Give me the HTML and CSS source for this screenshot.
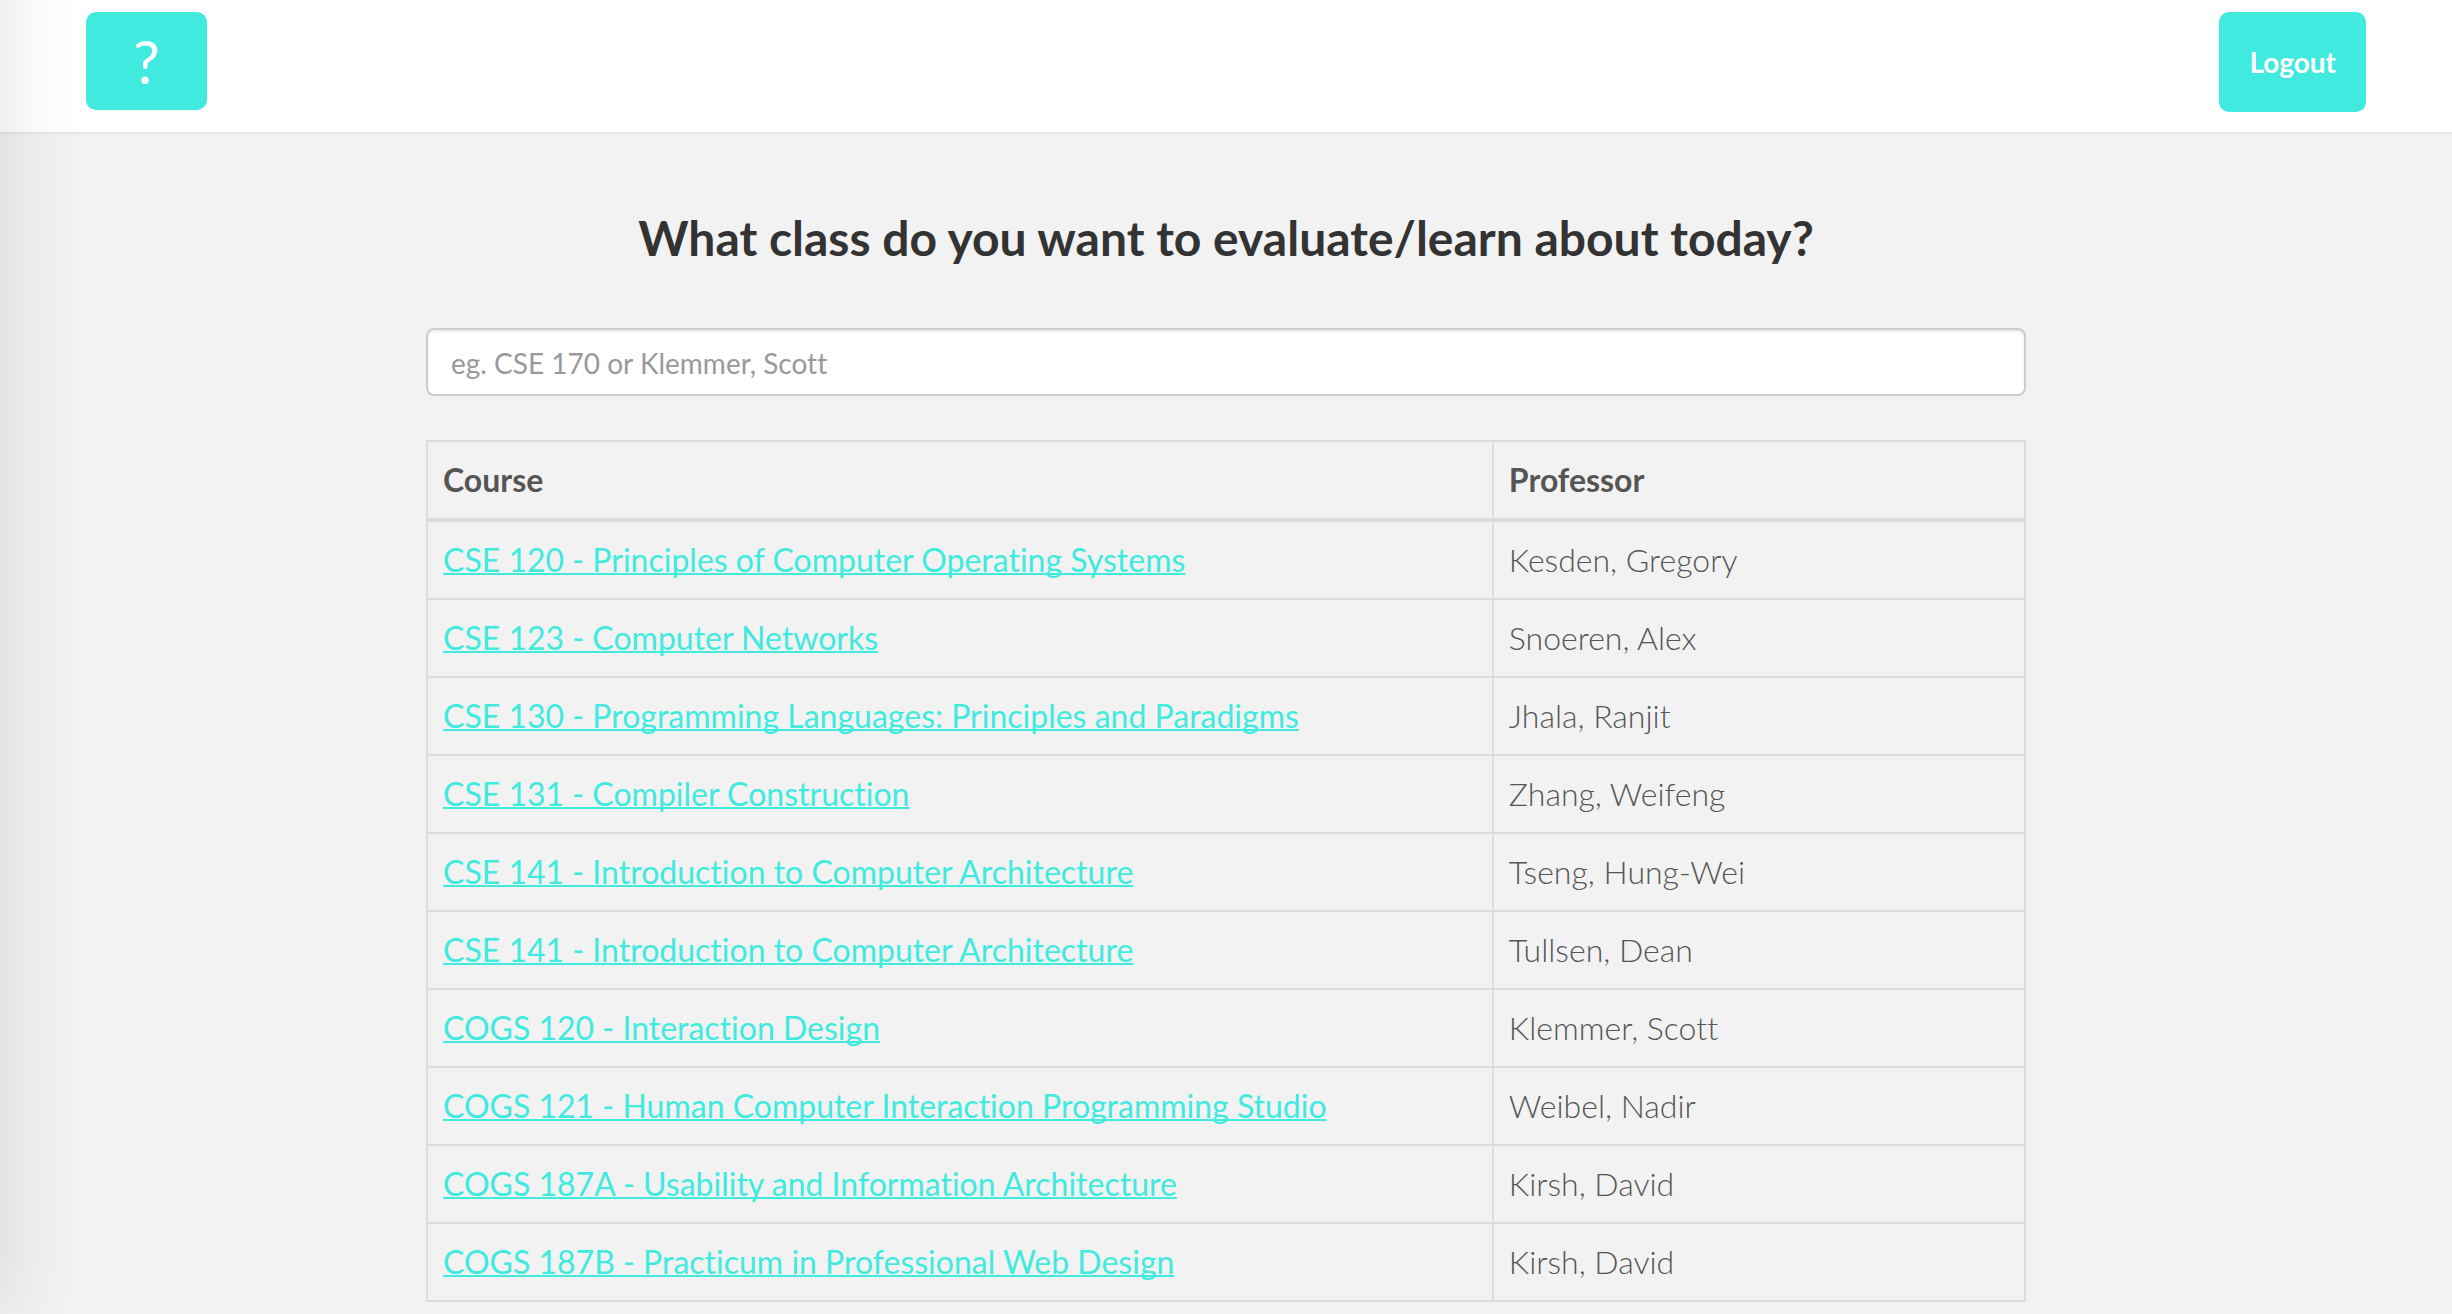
FILE: index.html
```html
<!DOCTYPE html>
<html lang="en">
<head>
<meta charset="utf-8">
<title>Find a class</title>
<link rel="stylesheet" href="styles.css">
</head>
<body>
<aside class="drawer" aria-hidden="true"></aside>
<header class="topbar">
  <button class="btn btn-help" type="button" aria-label="Help">?</button>
  <button class="btn btn-logout" type="button">Logout</button>
</header>
<main class="content">
  <h1 class="title"><label for="search">What class do you want to evaluate/learn about today?</label></h1>
  <input class="search" id="search" type="text" placeholder="eg. CSE 170 or Klemmer, Scott">
  <table class="courses">
    <thead>
      <tr><th class="col-course" scope="col">Course</th><th scope="col">Professor</th></tr>
    </thead>
    <tbody>
      <tr><td><a href="#">CSE 120 - Principles of Computer Operating Systems</a></td><td>Kesden, Gregory</td></tr>
      <tr><td><a href="#">CSE 123 - Computer Networks</a></td><td>Snoeren, Alex</td></tr>
      <tr><td><a href="#">CSE 130 - Programming Languages: Principles and Paradigms</a></td><td>Jhala, Ranjit</td></tr>
      <tr><td><a href="#">CSE 131 - Compiler Construction</a></td><td>Zhang, Weifeng</td></tr>
      <tr><td><a href="#">CSE 141 - Introduction to Computer Architecture</a></td><td>Tseng, Hung-Wei</td></tr>
      <tr><td><a href="#">CSE 141 - Introduction to Computer Architecture</a></td><td>Tullsen, Dean</td></tr>
      <tr><td><a href="#">COGS 120 - Interaction Design</a></td><td>Klemmer, Scott</td></tr>
      <tr><td><a href="#">COGS 121 - Human Computer Interaction Programming Studio</a></td><td>Weibel, Nadir</td></tr>
      <tr><td><a href="#">COGS 187A - Usability and Information Architecture</a></td><td>Kirsh, David</td></tr>
      <tr><td><a href="#">COGS 187B - Practicum in Professional Web Design</a></td><td>Kirsh, David</td></tr>
    </tbody>
  </table>
</main>
</body>
</html>
```

FILE: styles.css
```css
* {
  box-sizing: border-box;
}

body {
  margin: 0;
  background: #f2f2f2;
  color: #555;
  font-family: Lato, "Open Sans", sans-serif;
  font-size: 32px;
  font-variant-ligatures: none;
  line-height: 44px;
}

/* Off-canvas menu: only its shadow reaches the page while closed */
.drawer {
  position: fixed;
  top: -100px;
  bottom: 0;
  left: -400px;
  width: 400px;
  box-shadow: 0 0 80px rgba(0, 0, 0, 0.12);
  pointer-events: none;
}

.topbar {
  display: flex;
  justify-content: space-between;
  align-items: flex-start;
  padding: 12px 86px 20px;
  background: #fff;
  border-bottom: 2px solid #e5e5e5;
}

.btn {
  border: 0;
  border-radius: 10px;
  background: #40eade;
  color: #fff;
  font-family: inherit;
  cursor: pointer;
}

.btn-help {
  padding: 14px 47px;
  font-size: 60px;
  line-height: 70px;
}

.btn-logout {
  padding: 30px;
  font-size: 28px;
  font-weight: 700;
  line-height: 40px;
}

.content {
  max-width: 1640px;
  margin: 0 auto;
  padding: 76px 20px 12px;
}

.title {
  margin: 0;
  color: #333;
  font-size: 48px;
  font-weight: 700;
  line-height: 56px;
  text-align: center;
}

.search {
  display: block;
  width: 100%;
  margin: 62px 0 44px;
  padding: 13px 23px 11px;
  border: 2px solid #ccc;
  border-radius: 8px;
  background: #fff;
  box-shadow: inset 0 2px 2px rgba(0, 0, 0, 0.075);
  font-family: inherit;
  font-size: 28px;
  font-variant-ligatures: none;
  line-height: 40px;
}

.search::placeholder {
  color: #999;
  opacity: 1;
}

.courses {
  width: 100%;
  border-collapse: collapse;
  table-layout: fixed;
}

.courses th,
.courses td {
  padding: 16px 15px;
  border: 2px solid #ddd;
  text-align: left;
}

.courses th {
  border-bottom-width: 4px;
  font-weight: 700;
}

.courses td {
  font-weight: 300;
}

.col-course {
  width: 66.7%;
}

.courses a {
  color: #40eade;
  font-weight: 400;
  text-decoration: underline;
  text-decoration-thickness: 2px;
  text-decoration-skip-ink: none;
}
```
